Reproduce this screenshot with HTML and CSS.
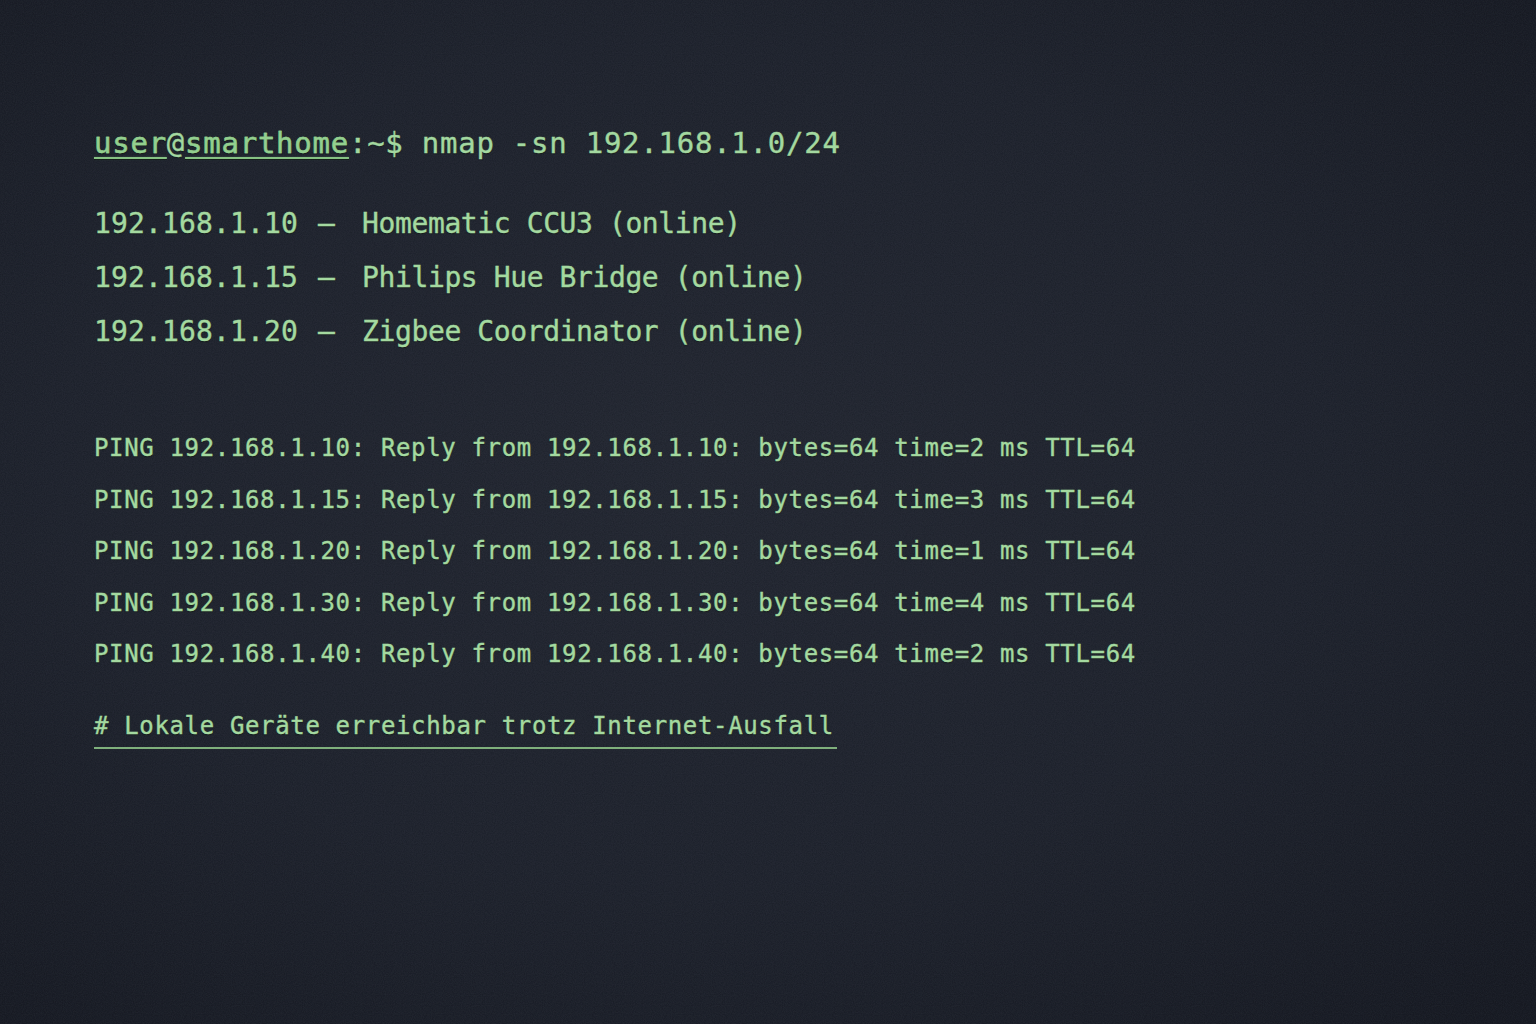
FILE: index.html
```html
<!DOCTYPE html>
<html lang="de">
<head>
<meta charset="utf-8">
<title>Terminal</title>
<link rel="stylesheet" href="styles.css">
</head>
<body>
<main class="terminal">
  <div class="prompt"><span class="ul">user</span>@<span class="ul">smarthome</span>:~$ nmap -sn 192.168.1.0/24</div>
  <div class="hosts">
    <div class="host"><span class="ip">192.168.1.10</span><span class="dash">–</span><span class="name">Homematic CCU3 (online)</span></div>
    <div class="host"><span class="ip">192.168.1.15</span><span class="dash">–</span><span class="name">Philips Hue Bridge (online)</span></div>
    <div class="host"><span class="ip">192.168.1.20</span><span class="dash">–</span><span class="name">Zigbee Coordinator (online)</span></div>
  </div>
  <div class="pings">
    <div class="ping">PING 192.168.1.10: Reply from 192.168.1.10: bytes=64 time=2 ms TTL=64</div>
    <div class="ping">PING 192.168.1.15: Reply from 192.168.1.15: bytes=64 time=3 ms TTL=64</div>
    <div class="ping">PING 192.168.1.20: Reply from 192.168.1.20: bytes=64 time=1 ms TTL=64</div>
    <div class="ping">PING 192.168.1.30: Reply from 192.168.1.30: bytes=64 time=4 ms TTL=64</div>
    <div class="ping">PING 192.168.1.40: Reply from 192.168.1.40: bytes=64 time=2 ms TTL=64</div>
  </div>
  <div class="comment-row"><span class="comment"># Lokale Geräte erreichbar trotz Internet-Ausfall</span></div>
</main>
</body>
</html>
```

FILE: styles.css
```css
html, body {
  margin: 0;
  padding: 0;
  height: 100%;
}

body {
  width: 1536px;
  height: 1024px;
  overflow: hidden;
  background-color: #1a1e27;
  background-image:
    url("data:image/svg+xml;utf8,<svg xmlns='http://www.w3.org/2000/svg' width='240' height='240'><filter id='n'><feTurbulence type='fractalNoise' baseFrequency='0.9' numOctaves='2' stitchTiles='stitch'/><feColorMatrix values='0 0 0 0 0.5  0 0 0 0 0.55  0 0 0 0 0.7  0 0 0 0.08 0'/></filter><rect width='240' height='240' filter='url(%23n)'/></svg>"),
    radial-gradient(ellipse 75% 75% at 45% 45%, #1e222c 0%, #1a1e28 55%, #12151d 100%);
  font-family: "DejaVu Sans Mono", "Liberation Mono", monospace;
  color: #a4d9a0;
}

.terminal {
  display: flex;
  flex-direction: column;
  align-items: flex-start;
  padding: 123px 0 0 94px;
  text-shadow: 0 0 2px rgba(120, 200, 120, 0.25), 0 1px 1px rgba(0, 0, 0, 0.6);
  -webkit-text-stroke: 0.35px currentColor;
  white-space: pre;
}

.prompt {
  font-size: 29px;
  line-height: 40px;
  letter-spacing: 0.75px;
  color: #a3d8a0;
}

.prompt .ul {
  color: #93cf8f;
  text-decoration: underline;
  text-decoration-thickness: 2px;
  text-underline-offset: 4px;
  text-decoration-color: #86c283;
}

.hosts {
  display: flex;
  flex-direction: column;
  margin-top: 34px;
}

.host {
  display: flex;
  align-items: baseline;
  font-size: 28px;
  line-height: 54px;
}

.host .ip {
  letter-spacing: 0.15px;
}

.host .dash {
  width: 30px;
  margin-left: 20px;
  margin-right: 14px;
}

.host .name {
  letter-spacing: -0.4px;
}

.pings {
  display: flex;
  flex-direction: column;
  margin-top: 64px;
}

.ping {
  font-size: 24px;
  line-height: 51.5px;
  letter-spacing: 0.65px;
}

.comment-row {
  margin-top: 30px;
}

.comment {
  display: inline-block;
  font-size: 24px;
  line-height: 30px;
  letter-spacing: 0.65px;
  padding: 0 3px 6px 0;
  border-bottom: 2px solid #7fb07c;
}
```
